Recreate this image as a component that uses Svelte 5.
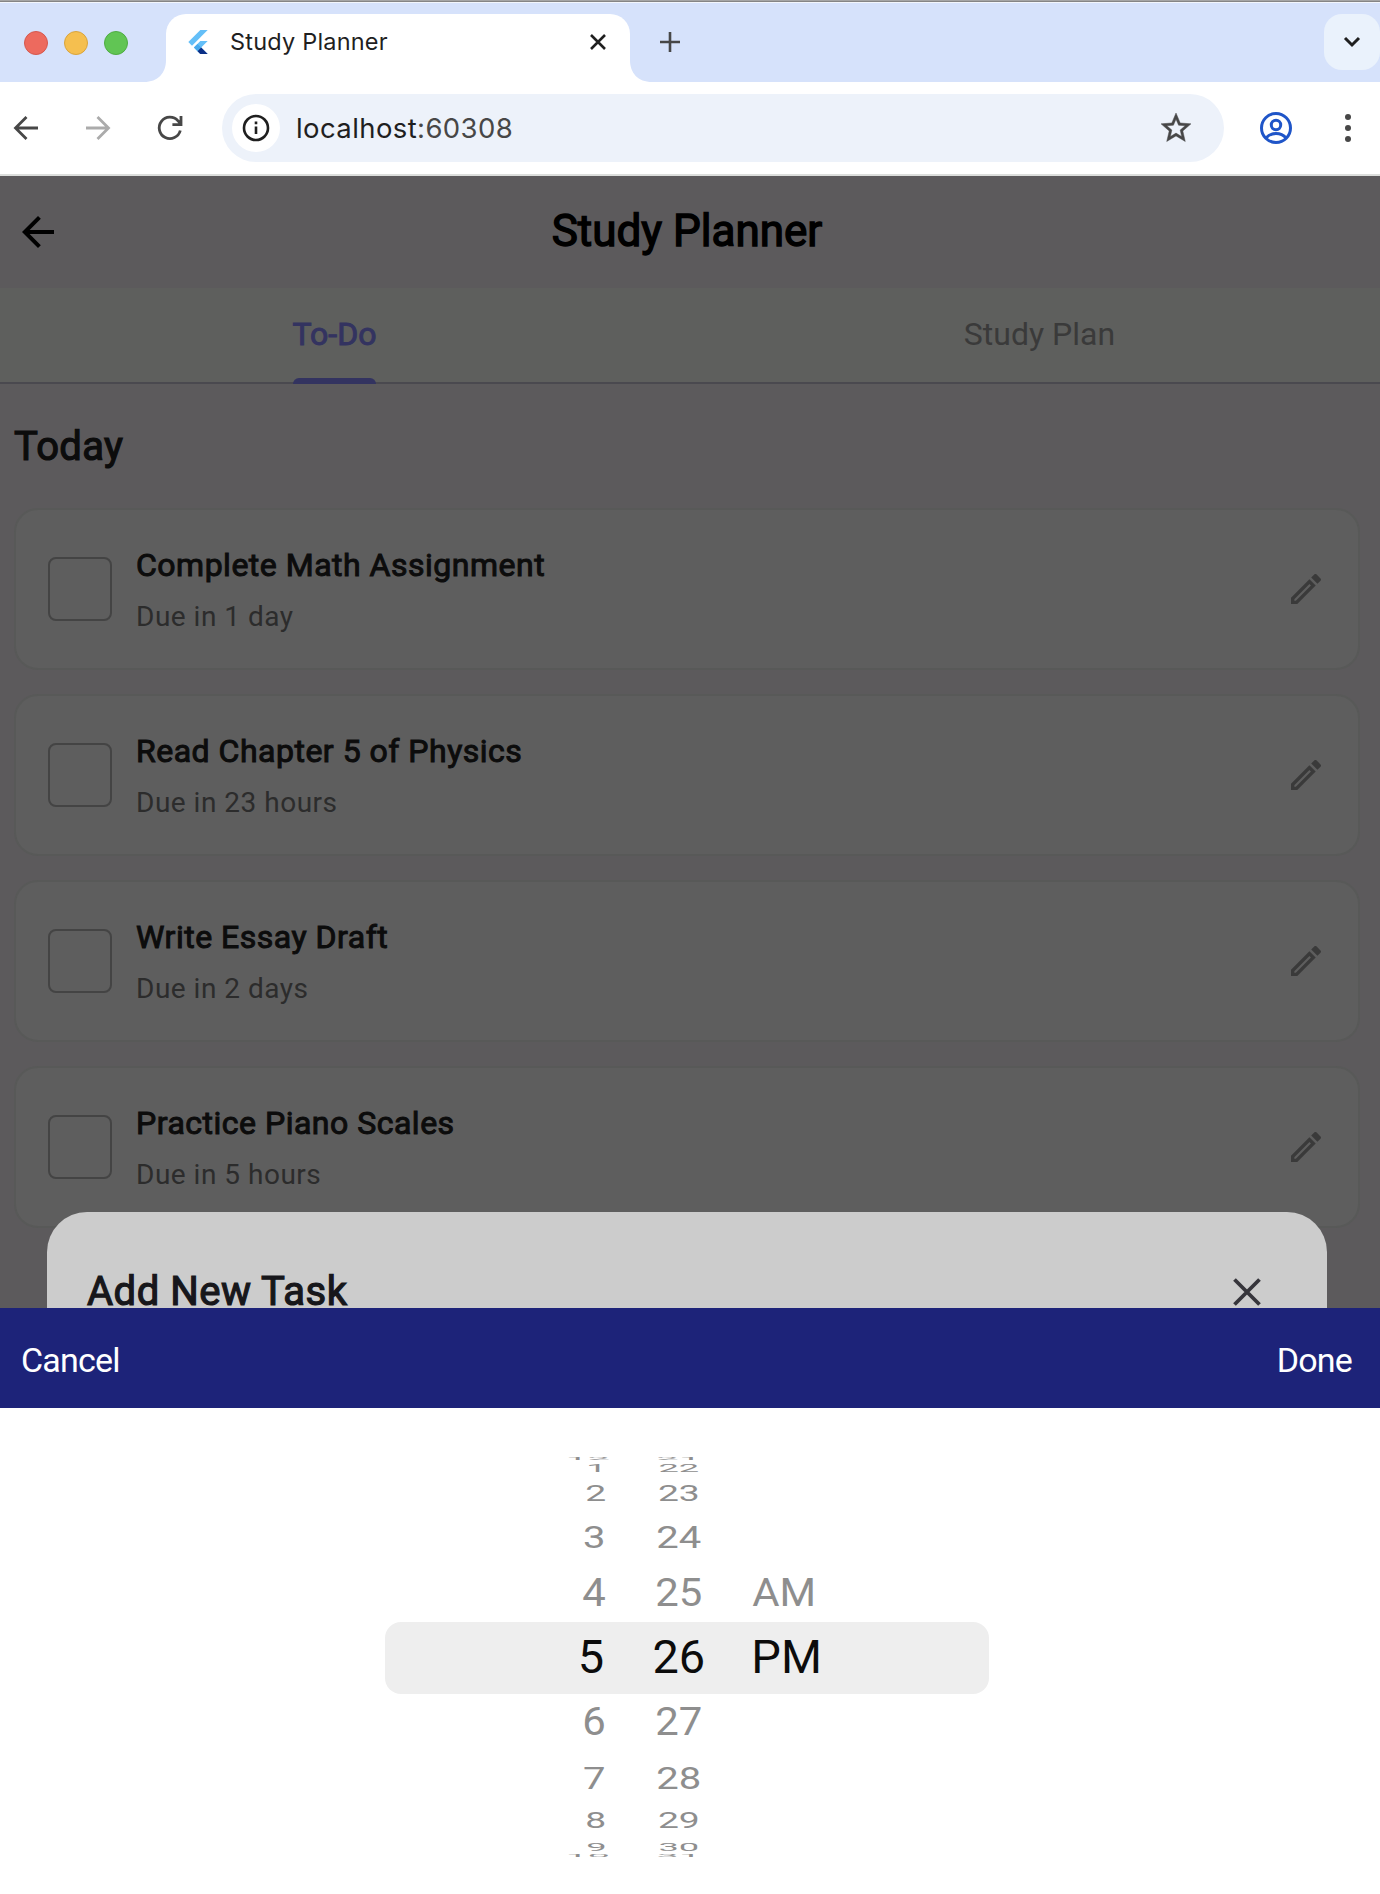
<script>
  const tasks = [
    { title: 'Complete Math Assignment', due: 'Due in 1 day' },
    { title: 'Read Chapter 5 of Physics', due: 'Due in 23 hours' },
    { title: 'Write Essay Draft', due: 'Due in 2 days' },
    { title: 'Practice Piano Scales', due: 'Due in 5 hours' }
  ];

  // Row geometry of the picker wheel by distance from the selected row.
  const rows = [
    { h: 66, sx: 1.02, sy: 1, dx: -4, dy: 0 },
    { h: 63.6, sx: 0.91, sy: 0.845, dx: -1, dy: 0 },
    { h: 48.4, sx: 0.87, sy: 0.69, dx: -0.7, dy: 0.5 },
    { h: 36.6, sx: 0.81, sy: 0.465, dx: 0.8, dy: 1 },
    { h: 15.4, sx: 0.79, sy: 0.24, dx: 1.6, dy: 0.8 },
    { h: 3.2, sx: 0.86, sy: 0.06, dx: -7, dy: 0.8 }
  ];
  const distances = [-5, -4, -3, -2, -1, 0, 1, 2, 3, 4, 5];

  const wheels = [
    { name: 'hour', shift: 1, values: ['12', '1', '2', '3', '4', '5', '6', '7', '8', '9', '10'] },
    { name: 'minute', shift: 0, values: ['21', '22', '23', '24', '25', '26', '27', '28', '29', '30', '31'] },
    { name: 'period', shift: -1, values: ['', '', '', '', 'AM', 'PM', '', '', '', '', ''] }
  ];
</script>

<div class="window">
  <div class="strip">
    <div class="lights">
      <span class="light red"></span>
      <span class="light yellow"></span>
      <span class="light green"></span>
    </div>
    <svg class="flare" width="22" height="22" viewBox="0 0 22 22"><path d="M22 0v22H0C14 22 22 13 22 0z" fill="#fff" /></svg>
    <div class="tab">
      <svg class="favicon" width="24" height="24" viewBox="0 0 24 24">
        <path d="M14.3 0L2.3 12 6 15.7 21.7 0z" fill="#64bff8" />
        <path d="M14.3 11.1L7.9 17.5l6.4 6.5h7.4l-6.5-6.5 6.5-6.4z" fill="#64bff8" />
        <path d="M11.5 13.9l3.700 3.600-3.700 3.700-3.600-3.700z" fill="#48a9ec" />
        <path d="M14.3 24h7.400l-6.500-6.500-3.700 3.700z" fill="#0b2f86" />
      </svg>
      <span class="tab-title">Study Planner</span>
      <svg width="20" height="20" viewBox="0 0 20 20"><path d="M3 3l14 14M17 3L3 17" stroke="#1f1f1f" stroke-width="2.6" /></svg>
    </div>
    <svg class="flare" width="22" height="22" viewBox="0 0 22 22"><path d="M0 0v22h22C8 22 0 13 0 0z" fill="#fff" /></svg>
    <svg class="plus" width="24" height="24" viewBox="0 0 24 24"><path d="M12 2v20M2 12h20" stroke="#474747" stroke-width="2.6" /></svg>
    <div class="chevron">
      <svg width="20" height="14" viewBox="0 0 20 14"><path d="M3 3l7 7 7-7" fill="none" stroke="#1f1f1f" stroke-width="3" /></svg>
    </div>
  </div>

  <div class="toolbar">
    <svg class="nav" width="28" height="28" viewBox="0 0 28 28"><path d="M26 14H4M14.5 3L3.5 14l11 11" fill="none" stroke="#474747" stroke-width="2.8" /></svg>
    <svg class="nav" width="28" height="28" viewBox="0 0 28 28"><path d="M2 14h22M13.500 3l11 11-11 11" fill="none" stroke="#ababab" stroke-width="2.8" /></svg>
    <svg class="nav" width="28" height="28" viewBox="0 0 28 28"><path d="M24.300 16.500A10.700 10.700 0 1 1 22 6.800L24.500 9.500M25 2v8.600h-8.600" fill="none" stroke="#474747" stroke-width="2.8" /></svg>
    <div class="omnibox">
      <span class="info">
        <svg width="30" height="30" viewBox="0 0 30 30"><circle cx="15" cy="15" r="12" fill="none" stroke="#1f1f1f" stroke-width="2.6" /><path d="M15 13.500v7.500M15 8.500v2.800" stroke="#1f1f1f" stroke-width="2.6" /></svg>
      </span>
      <span class="url">localhost<span class="port">:60308</span></span>
      <svg class="star" width="36" height="36" viewBox="0 0 24 24"><path d="M22 9.240l-7.190-.62L12 2 9.190 8.630 2 9.240l5.460 4.730L5.820 21 12 17.270 18.180 21l-1.630-7.030L22 9.240zM12 15.400l-3.760 2.270 1-4.280-3.320-2.880 4.380-.38L12 6.100l1.710 4.040 4.380.38-3.320 2.880 1 4.280L12 15.400z" fill="#474747" stroke="#474747" stroke-width=".3" /></svg>
    </div>
    <svg class="profile" width="34" height="34" viewBox="0 0 34 34" fill="none" stroke="#1f55c8" stroke-width="3"><circle cx="17" cy="17" r="14.500" /><circle cx="17" cy="14" r="4.700" /><path d="M7 27c5-6 15-6 20 0" /></svg>
    <svg class="dots" width="8" height="30" viewBox="0 0 8 30" fill="#474747"><circle cx="4" cy="4" r="3" /><circle cx="4" cy="15" r="3" /><circle cx="4" cy="26" r="3" /></svg>
  </div>

  <div class="app">
    <header class="appbar">
      <svg class="back" width="48" height="48" viewBox="0 0 24 24"><path d="M20 11H7.830l5.590-5.590L12 4l-8 8 8 8 1.410-1.410L7.830 13H20v-2z" /></svg>
      <h1>Study Planner</h1>
    </header>
    <nav class="tabs">
      <div class="tab-item active"><span>To-Do</span></div>
      <div class="tab-item"><span>Study Plan</span></div>
    </nav>
    <h2>Today</h2>
    <div class="list">
      {#each tasks as task}
        <div class="card">
          <span class="box"></span>
          <div class="info-text">
            <div class="title">{task.title}</div>
            <div class="due">{task.due}</div>
          </div>
          <svg width="40" height="40" viewBox="0 0 24 24"><path d="M14.060 9.020l.92.920L5.920 19H5v-.92l9.060-9.060M17.660 3c-.25 0-.51.100-.7.290l-1.830 1.830 3.750 3.750 1.830-1.830c.39-.39.39-1.020 0-1.410l-2.340-2.340c-.2-.2-.45-.29-.71-.29zm-3.600 3.190L3 17.250V21h3.750L17.810 9.940l-3.750-3.750z" fill="#3a3a3a" /></svg>
        </div>
      {/each}
    </div>
    <div class="modal">
      <span class="modal-title">Add New Task</span>
      <svg width="32" height="32" viewBox="0 0 32 32"><path d="M3.500 3.500l25 25M28.500 3.500l-25 25" stroke="#36353b" stroke-width="3.800" /></svg>
    </div>
  </div>

  <div class="actions">
    <span class="cancel">Cancel</span>
    <span class="done">Done</span>
  </div>

  <div class="picker">
    <div class="highlight"></div>
    {#each wheels as wheel}
      <div class="wheel {wheel.name}">
        {#each distances as d, i}
          {@const row = rows[Math.abs(d)]}
          <div class="row" class:selected={d === 0} style="height: {row.h}px">
            <span style="transform: translate({row.dx * wheel.shift}px, {row.dy}px) scale({row.sx}, {row.sy})">{wheel.values[i]}</span>
          </div>
        {/each}
      </div>
    {/each}
  </div>
</div>

<style>
  :global(body) {
    background: #fff;
    overflow: hidden;
  }
  .window {
    width: 1380px;
    height: 1894px;
    overflow: hidden;
    display: flex;
    flex-direction: column;
    font-family: Roboto, sans-serif;
  }
  .window > * {
    flex-shrink: 0;
  }
  svg {
    display: block;
    flex-shrink: 0;
  }

  /* Browser tab strip */
  .strip {
    height: 82px;
    box-sizing: border-box;
    background: linear-gradient(#a5a5a5 0 1px, #858585 1px 2px, #f3f6fc 2px 3px, #d6e2fb 3px);
    display: flex;
    align-items: flex-end;
    font-family: Inter, sans-serif;
  }
  .lights {
    display: flex;
    gap: 16px;
    width: 120px;
    padding: 0 0 27px 24px;
  }
  .light {
    width: 24px;
    height: 24px;
    border-radius: 50%;
    box-sizing: border-box;
  }
  .red {
    background: #ed6a5e;
    border: 1px solid #d5584d;
  }
  .yellow {
    background: #f5bf4f;
    border: 1px solid #d9a43c;
  }
  .green {
    background: #61c554;
    border: 1px solid #4fac42;
  }
  .tab {
    width: 464px;
    height: 68px;
    box-sizing: border-box;
    background: #fff;
    border-radius: 20px 20px 0 0;
    padding: 0 22px 12px 20px;
    display: flex;
    align-items: center;
  }
  .tab-title {
    flex: 1;
    margin-left: 20px;
    padding-bottom: 2px;
    font-size: 23.5px;
    letter-spacing: 0.2px;
    color: #1f1f1f;
  }
  .plus {
    margin: 0 0 28px 6px;
  }
  .chevron {
    margin: 0 0 12px auto;
    width: 56px;
    height: 56px;
    border-radius: 18px;
    background: #eaf2fc;
    display: flex;
    align-items: center;
    justify-content: center;
  }

  /* Navigation toolbar */
  .toolbar {
    height: 94px;
    box-sizing: border-box;
    border-bottom: 2px solid #dcdedc;
    background: #fff;
    display: flex;
    align-items: center;
    padding-left: 12px;
    font-family: Inter, sans-serif;
  }
  .nav {
    margin-right: 44px;
  }
  .omnibox {
    width: 1002px;
    height: 68px;
    box-sizing: border-box;
    border-radius: 34px;
    background: #edf2fa;
    display: flex;
    align-items: center;
    padding: 0 30px 0 10px;
    margin-left: -6px;
  }
  .info {
    width: 48px;
    height: 48px;
    border-radius: 50%;
    background: #fff;
    display: flex;
    align-items: center;
    justify-content: center;
  }
  .url {
    flex: 1;
    margin-left: 16px;
    font-size: 27.5px;
    letter-spacing: 0.4px;
    color: #1f1f1f;
  }
  .port {
    color: #474747;
  }
  .profile {
    margin-left: 35px;
  }
  .dots {
    margin-left: 51px;
  }

  /* Page behind the barrier */
  .app {
    position: relative;
    width: 1410px;
    height: 1132px;
    margin-left: -18px;
    overflow: hidden;
    background: #5c5a5c;
  }
  .appbar {
    height: 112px;
    display: grid;
    grid-template-columns: 96px 1fr 96px;
    align-items: center;
  }
  .back {
    margin-left: 32px;
  }
  h1 {
    margin: 0;
    padding-bottom: 2px;
    text-align: center;
    font-size: 44px;
    font-weight: 400;
    color: #000;
    -webkit-text-stroke: 1.4px #000;
  }
  .tabs {
    height: 96px;
    box-sizing: border-box;
    display: flex;
    background: #5e5f5d;
    border-bottom: 2px solid #4a494f;
  }
  .tab-item {
    flex: 1;
    height: 96px;
    display: flex;
    justify-content: center;
    font-size: 32px;
    color: #3a3a3a;
  }
  .tab-item span {
    height: 96px;
    line-height: 92px;
    box-sizing: border-box;
  }
  .active span {
    display: flex;
    flex-direction: column;
    color: #333360;
    -webkit-text-stroke: 1px #333360;
  }
  .active span::after {
    content: '';
    height: 6px;
    margin-top: -2px;
    border-radius: 6px 6px 0 0;
    background: #333360;
  }
  h2 {
    margin: 0 0 0 32px;
    height: 124px;
    line-height: 125px;
    font-size: 40px;
    font-weight: 400;
    letter-spacing: 0.3px;
    color: #0c0c0c;
    -webkit-text-stroke: 1.2px #0c0c0c;
  }
  .list {
    display: flex;
    flex-direction: column;
    gap: 24px;
    padding: 0 32px;
  }
  .card {
    height: 162px;
    box-sizing: border-box;
    border: 2px solid #585958;
    border-radius: 24px;
    background: #5e5e5e;
    padding: 0 32px;
    display: flex;
    align-items: center;
  }
  .box {
    width: 64px;
    height: 64px;
    box-sizing: border-box;
    border: 2px solid #444;
    border-radius: 8px;
  }
  .info-text {
    flex: 1;
    margin-left: 24px;
  }
  .title {
    font-size: 32px;
    line-height: 48px;
    letter-spacing: 0.5px;
    color: #0c0c0c;
    -webkit-text-stroke: 1px #0c0c0c;
  }
  .due {
    margin-top: 8px;
    font-size: 28px;
    line-height: 40px;
    letter-spacing: 0.5px;
    color: #2c2c2c;
  }
  .modal {
    position: absolute;
    left: 65px;
    top: 1036px;
    width: 1280px;
    height: 140px;
    box-sizing: border-box;
    border-radius: 40px 40px 0 0;
    background: #ccc;
    padding: 56px 64px 0 40px;
    display: flex;
    justify-content: space-between;
    align-items: flex-start;
  }
  .modal svg {
    margin-top: 8px;
  }
  .modal-title {
    font-size: 40px;
    line-height: 48px;
    letter-spacing: 0.5px;
    color: #17171b;
    -webkit-text-stroke: 1.2px #17171b;
  }

  /* Picker action bar */
  .actions {
    height: 100px;
    box-sizing: border-box;
    background: #1d2379;
    color: #fff;
    padding: 4px 28px 0 21px;
    display: flex;
    justify-content: space-between;
    align-items: center;
    font-size: 34px;
    letter-spacing: -0.8px;
  }

  /* Time wheel */
  .picker {
    position: relative;
    height: 486px;
    box-sizing: border-box;
    padding: 48.500px 0 0 554.800px;
    display: flex;
    align-items: flex-start;
    background: #fff;
  }
  .highlight {
    position: absolute;
    left: 385px;
    top: 214px;
    width: 604px;
    height: 72px;
    border-radius: 16px;
    background: #eee;
  }
  .wheel {
    position: relative;
    width: 80px;
  }
  .minute {
    margin-left: 4px;
  }
  .period {
    margin-left: 24px;
  }
  .row {
    display: flex;
    align-items: center;
    justify-content: center;
    font-size: 46px;
    line-height: 1;
    color: #8e8e8e;
  }
  .selected {
    color: #0c0c0c;
  }
</style>
